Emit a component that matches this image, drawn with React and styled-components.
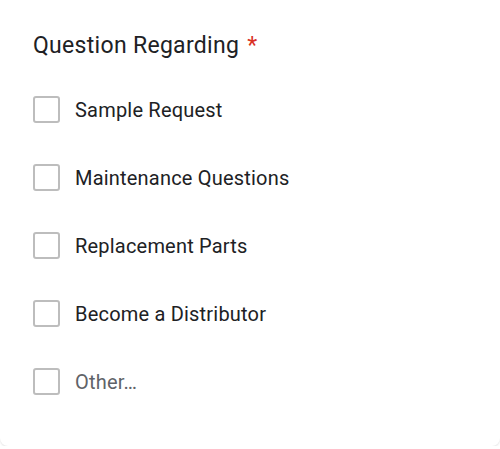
import styled, { createGlobalStyle } from 'styled-components'

const GlobalStyle = createGlobalStyle`
  body {
    margin: 0;
    background: #ffffff;
    font-family: Roboto, "Liberation Sans", sans-serif;
  }
`

const Card = styled.div`
  width: 500px;
  height: 446px;
  box-sizing: border-box;
  background: #ffffff;
  border-radius: 0 0 8px 8px;
  box-shadow: 0 1px 2px rgba(60, 64, 67, 0.15);
  padding: 30px 33px 0;
`

const Title = styled.div`
  font-size: 23px;
  line-height: 32px;
  letter-spacing: 0.3px;
  color: #202124;
`

const Required = styled.span`
  color: #d93025;
  margin-left: 8px;
`

const List = styled.div`
  display: flex;
  flex-direction: column;
  gap: 41px;
  margin-top: 34px;
`

const Option = styled.label`
  display: flex;
  align-items: center;
  gap: 15px;
  height: 27px;
`

const Box = styled.span`
  width: 27px;
  height: 27px;
  box-sizing: border-box;
  border: 2px solid #bdbdbd;
  border-radius: 3px;
  flex-shrink: 0;
`

const OptionText = styled.span`
  font-size: 20px;
  letter-spacing: 0.2px;
  color: ${(props) => (props.muted ? '#5f6368' : '#202124')};
`

const options = [
  'Sample Request',
  'Maintenance Questions',
  'Replacement Parts',
  'Become a Distributor',
]

function App() {
  return (
    <>
      <GlobalStyle />
      <Card>
        <Title>
          Question Regarding<Required>*</Required>
        </Title>
        <List>
          {options.map((o) => (
            <Option key={o}>
              <Box />
              <OptionText>{o}</OptionText>
            </Option>
          ))}
          <Option>
            <Box />
            <OptionText muted>Other…</OptionText>
          </Option>
        </List>
      </Card>
    </>
  )
}

export default App
